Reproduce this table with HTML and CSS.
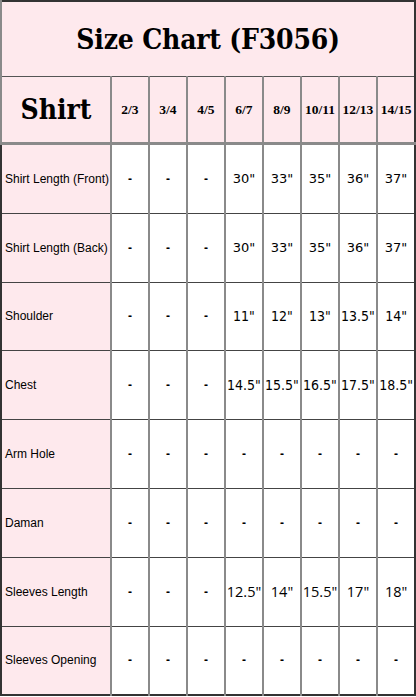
FILE: index.html
```html
<!DOCTYPE html>
<html>
<head>
<meta charset="utf-8">
<link rel="stylesheet" href="styles.css">
</head>
<body>
<table class="chart">
  <colgroup>
    <col class="c-label">
    <col class="c-size"><col class="c-size"><col class="c-size"><col class="c-size">
    <col class="c-size"><col class="c-size"><col class="c-size"><col class="c-size">
  </colgroup>
  <tr class="title-row"><td colspan="9" class="title">Size Chart (F3056)</td></tr>
  <tr class="head-row">
    <td class="shirt">Shirt</td>
    <td class="size">2/3</td><td class="size">3/4</td><td class="size">4/5</td><td class="size">6/7</td>
    <td class="size">8/9</td><td class="size">10/11</td><td class="size">12/13</td><td class="size">14/15</td>
  </tr>
  <tr class="row v-verdana">
    <td class="label">Shirt Length (Front)</td>
    <td class="dash">-</td><td class="dash">-</td><td class="dash">-</td>
    <td>30"</td><td>33"</td><td>35"</td><td>36"</td><td>37"</td>
  </tr>
  <tr class="row v-verdana">
    <td class="label">Shirt Length (Back)</td>
    <td class="dash">-</td><td class="dash">-</td><td class="dash">-</td>
    <td>30"</td><td>33"</td><td>35"</td><td>36"</td><td>37"</td>
  </tr>
  <tr class="row v-tahoma">
    <td class="label">Shoulder</td>
    <td class="dash">-</td><td class="dash">-</td><td class="dash">-</td>
    <td>11"</td><td>12"</td><td>13"</td><td>13.5"</td><td>14"</td>
  </tr>
  <tr class="row v-tahoma">
    <td class="label">Chest</td>
    <td class="dash">-</td><td class="dash">-</td><td class="dash">-</td>
    <td>14.5"</td><td>15.5"</td><td>16.5"</td><td>17.5"</td><td>18.5"</td>
  </tr>
  <tr class="row">
    <td class="label">Arm Hole</td>
    <td class="dash">-</td><td class="dash">-</td><td class="dash">-</td><td class="dash">-</td>
    <td class="dash">-</td><td class="dash">-</td><td class="dash">-</td><td class="dash">-</td>
  </tr>
  <tr class="row">
    <td class="label">Daman</td>
    <td class="dash">-</td><td class="dash">-</td><td class="dash">-</td><td class="dash">-</td>
    <td class="dash">-</td><td class="dash">-</td><td class="dash">-</td><td class="dash">-</td>
  </tr>
  <tr class="row v-calibri">
    <td class="label">Sleeves Length</td>
    <td class="dash">-</td><td class="dash">-</td><td class="dash">-</td>
    <td>12.5"</td><td>14"</td><td>15.5"</td><td>17"</td><td>18"</td>
  </tr>
  <tr class="row last">
    <td class="label">Sleeves Opening</td>
    <td class="dash">-</td><td class="dash">-</td><td class="dash">-</td><td class="dash">-</td>
    <td class="dash">-</td><td class="dash">-</td><td class="dash">-</td><td class="dash">-</td>
  </tr>
</table>
</body>
</html>
```
FILE: styles.css
```css
html, body {
  margin: 0;
  padding: 0;
  background: #ffffff;
}
.chart {
  width: 415px;
  table-layout: fixed;
  border-collapse: collapse;
  border: 2px solid #333333;
  font-family: "Liberation Sans", Arial, sans-serif;
  color: #000;
}
.c-label { width: 110px; }
.c-size { width: 38px; }
.chart td {
  padding: 0;
  text-align: center;
  vertical-align: middle;
  border-top: 1px solid #444444;
  border-left: 2px solid #8a8a8a;
  white-space: nowrap;
  overflow: hidden;
}
.title-row td {
  height: 74px;
  background: #fee9ed;
  border-bottom: 1px solid #555;
}
.title {
  font-family: "DejaVu Serif Condensed", "DejaVu Serif", serif;
  font-weight: bold;
  font-size: 28px;
  letter-spacing: -0.2px;
  padding-top: 2px;
}
.head-row td {
  height: 65px;
  background: #fee9ed;
  border-bottom: 3px solid #8a8a8a;
}
.shirt {
  font-family: "DejaVu Serif Condensed", "DejaVu Serif", serif;
  font-weight: bold;
  font-size: 28px;
  border-right: 1px solid #444;
}
.size {
  font-family: "Liberation Serif", "Times New Roman", serif;
  font-weight: bold;
  font-size: 13.5px;
}
.row td {
  height: 67.8px;
  font-family: "DejaVu Sans", Verdana, sans-serif;
  font-size: 13px;
}
.row td.label {
  background: #fee9ed;
  text-align: left;
  padding-left: 3px;
  font-family: "Liberation Sans", Arial, sans-serif;
  font-size: 12px;
  border-left: none;
  border-right: 1px solid #444;
}
.row td.dash {
  font-family: "Liberation Sans", Arial, sans-serif;
  font-weight: bold;
  font-size: 12px;
}
.v-tahoma td {
  font-family: "DejaVu Sans Condensed", "DejaVu Sans", sans-serif;
  font-size: 14px;
}
.v-calibri td {
  font-family: "Open Sans", sans-serif;
  font-size: 14.5px;
}
```
